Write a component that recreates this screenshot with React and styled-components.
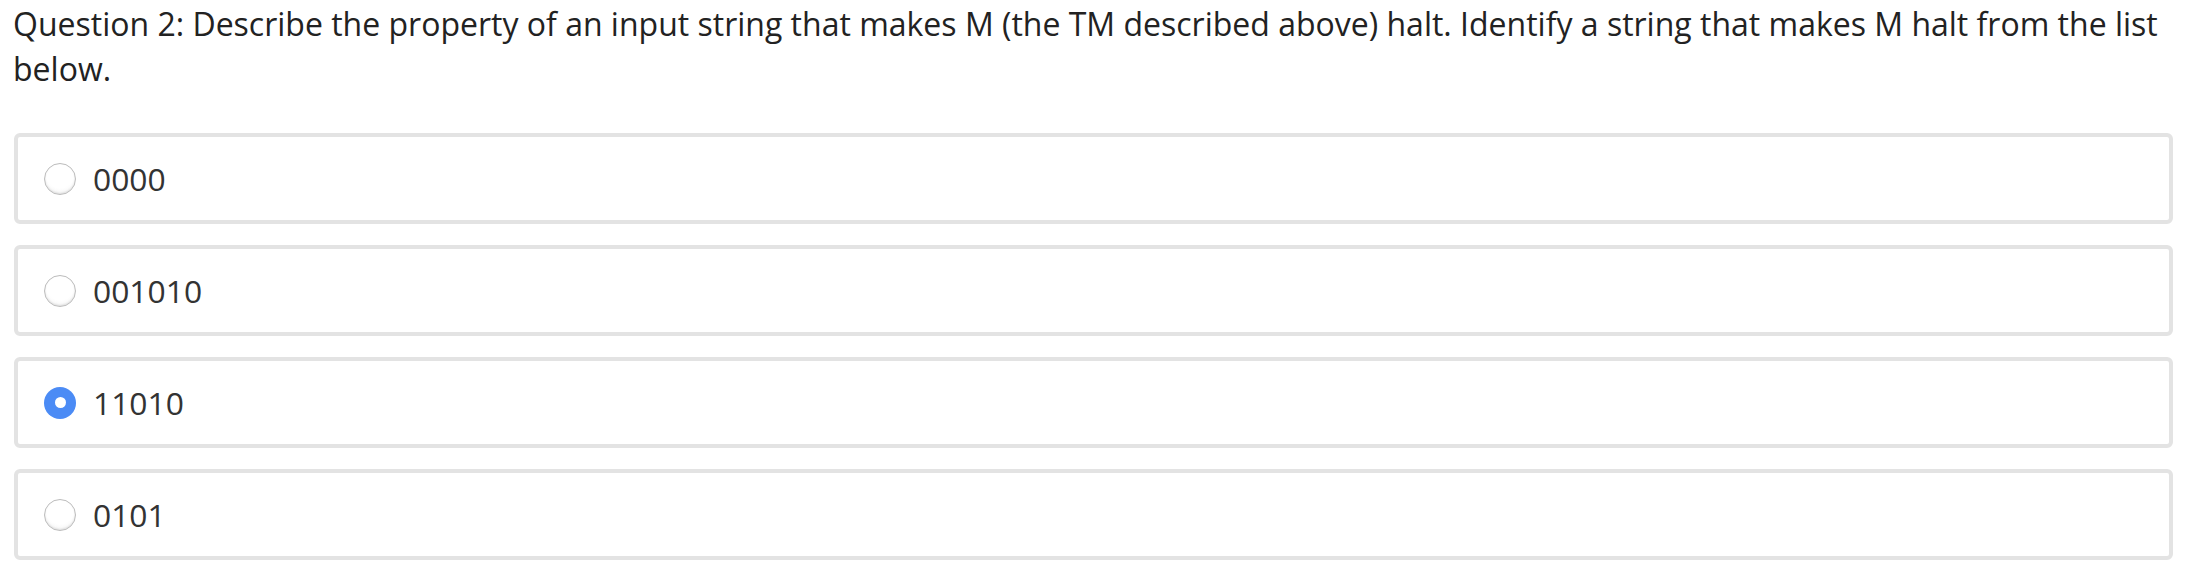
import React, { useState } from 'react';
import styled, { createGlobalStyle } from 'styled-components';

const GlobalStyle = createGlobalStyle`
  html, body {
    margin: 0;
    padding: 0;
    background: #ffffff;
    font-family: 'Open Sans', 'Noto Sans', sans-serif;
  }
`;

// --- STYLES ---

const Page = styled.div`
  padding: 0 15px 0 13px;
`;

const Question = styled.p`
  margin: 0 0 42px 0;
  padding-top: 1px;
  font-size: 32px;
  line-height: 45px;
  color: #222;
`;

const OptionList = styled.div`
  display: flex;
  flex-direction: column;
  gap: 21px;
  padding-left: 1px;
`;

const OptionBox = styled.label`
  display: flex;
  align-items: center;
  gap: 17px;
  height: 91px;
  box-sizing: border-box;
  padding: 0 0 0 26px;
  border: 4px solid #e3e3e3;
  border-radius: 6px;
  cursor: pointer;
`;

const Radio = styled.span`
  width: 32px;
  height: 32px;
  border-radius: 50%;
  box-sizing: border-box;
  flex-shrink: 0;
  display: flex;
  align-items: center;
  justify-content: center;
  border: ${p => (p.$checked ? 'none' : '1.5px solid #bcbcbc')};
  background: ${p =>
    p.$checked
      ? '#4b8bf5'
      : 'radial-gradient(circle at 50% 35%, #ffffff 55%, #eeeeee 100%)'};
  box-shadow: ${p => (p.$checked ? 'none' : 'inset 0 -1px 2px rgba(0,0,0,0.1)')};

  &::after {
    content: '';
    display: ${p => (p.$checked ? 'block' : 'none')};
    width: 11px;
    height: 11px;
    border-radius: 50%;
    background: #ffffff;
  }
`;

const OptionText = styled.span`
  font-size: 31.8px;
  color: #333;
  line-height: 1;
`;

// --- COMPONENT ---

const options = ['0000', '001010', '11010', '0101'];

const App = () => {
  const [selected, setSelected] = useState(2);

  return (
    <Page>
      <GlobalStyle />
      <Question>
        Question 2: Describe the property of an input string that makes M (the TM described above) halt. Identify a string that makes M halt from the list below.
      </Question>
      <OptionList>
        {options.map((opt, i) => (
          <OptionBox key={opt} onClick={() => setSelected(i)}>
            <Radio $checked={selected === i} />
            <OptionText>{opt}</OptionText>
          </OptionBox>
        ))}
      </OptionList>
    </Page>
  );
};

export default App;
